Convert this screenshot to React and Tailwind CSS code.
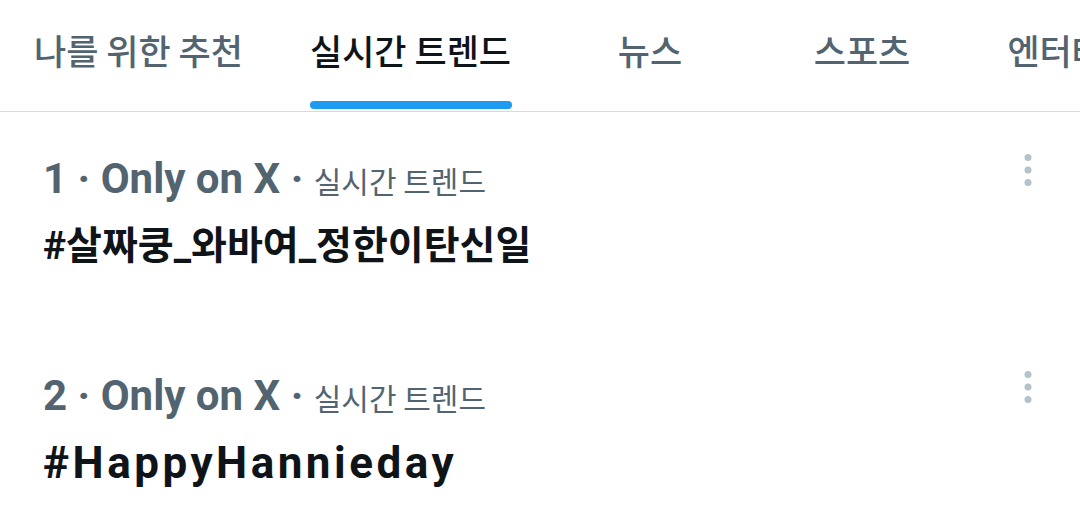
const tabs = [
  { label: "나를 위한 추천", w: "w-[277px]" },
  { label: "실시간 트렌드", w: "w-[267px]", active: true },
  { label: "뉴스", w: "w-[212px]" },
  { label: "스포츠", w: "w-[212px]" },
  { label: "엔터테인먼트", w: "pl-[35px]" },
];

const trends = [
  { rank: 1, tag: "#살짜쿵_와바여_정한이탄신일", korean: true },
  { rank: 2, tag: "#HappyHannieday" },
];

function MoreDots() {
  return (
    <svg width="8" height="33" viewBox="0 0 8 33" className="shrink-0 -mt-px">
      <circle cx="4" cy="3.5" r="3.5" fill="#b3c2cc" />
      <circle cx="4" cy="16" r="3.5" fill="#b3c2cc" />
      <circle cx="4" cy="28.5" r="3.5" fill="#b3c2cc" />
    </svg>
  );
}

export default function App() {
  return (
    <div className="w-[1080px] h-[526px] overflow-hidden bg-white font-['Roboto','Noto_Sans_CJK_KR',sans-serif]">
      <header className="flex h-[112px] border-b border-[#d3dbe0] overflow-hidden whitespace-nowrap">
        {tabs.map((t) => (
          <div key={t.label} className={`${t.w} shrink-0 flex flex-col items-center`}>
            <div
              className={`flex-1 flex items-center font-['Noto_Sans_CJK_KR',sans-serif] text-[35px] font-medium ${
                t.active ? "text-[#0f1419]" : "text-[#536471]"
              }`}
            >
              {t.label}
            </div>
            <div className={`h-[8px] w-[202px] mb-[2px] rounded-full ${t.active ? "bg-[#1d9bf0]" : "bg-transparent"}`} />
          </div>
        ))}
      </header>

      {trends.map((t) => (
        <div key={t.rank} className="flex justify-between items-start h-[217px] pt-[43px] pl-[43px] pr-[48px]">
          <div className="flex flex-col gap-[15px]">
            <div className="flex items-baseline leading-[48px] h-[48px] whitespace-pre">
              <span className="text-[42px] font-bold text-[#536471]">{`${t.rank} · Only on X · `}</span>
              <span className="font-['Noto_Sans_CJK_KR',sans-serif] text-[30px] text-[#536471]">실시간 트렌드</span>
            </div>
            {t.korean ? (
              <div className="h-[56px] leading-[56px] text-[39px] font-bold text-[#0f1419]">{t.tag}</div>
            ) : (
              <div className="h-[56px] leading-[56px] text-[44px] font-bold tracking-[3.5px] text-[#0f1419]">{t.tag}</div>
            )}
          </div>
          <MoreDots />
        </div>
      ))}
    </div>
  );
}
